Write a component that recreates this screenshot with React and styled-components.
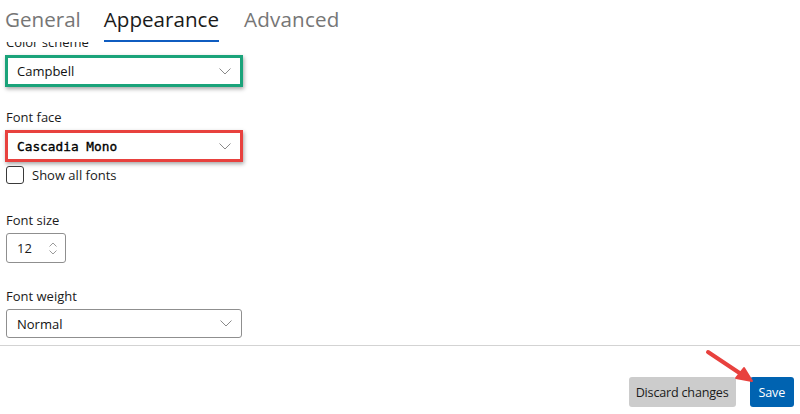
import styled, { createGlobalStyle } from "styled-components";

const GlobalStyle = createGlobalStyle`
  html, body {
    margin: 0;
    padding: 0;
    background: #ffffff;
  }
  body {
    font-family: "Open Sans", "Noto Sans", sans-serif;
    color: #1b1b1b;
  }
`;

function Chevron() {
  return (
    <svg width="12" height="7" viewBox="0 0 12 7">
      <path d="M0.5 0.5l5.5 5.5 5.5-5.5" fill="none" stroke="#8a8a8a" strokeWidth="1" />
    </svg>
  );
}

function Spinner() {
  return (
    <svg width="8" height="13" viewBox="0 0 8 13">
      <path d="M0.5 4.5l3.5-3.5 3.5 3.5M0.5 8.5l3.5 3.5 3.5-3.5" fill="none" stroke="#9a9a9a" strokeWidth="1" />
    </svg>
  );
}

function Dropdown({ value, highlight, mono }) {
  return (
    <Select $highlight={highlight}>
      <SelectText $mono={mono}>{value}</SelectText>
      <Chevron />
    </Select>
  );
}

export default function App() {
  return (
    <>
      <GlobalStyle />
      <Page>
        <TabBar>
          <Tab>General</Tab>
          <Tab $active>Appearance</Tab>
          <Tab $last>Advanced</Tab>
        </TabBar>

        <Form>
          <Field $top={0}>
            <Label>Color scheme</Label>
            <Dropdown value="Campbell" highlight="#1aa37a" />
          </Field>

          <Field $top={21}>
            <Label>Font face</Label>
            <Dropdown value="Cascadia Mono" highlight="#e8413e" mono />
            <CheckRow>
              <Checkbox />
              <span>Show all fonts</span>
            </CheckRow>
          </Field>

          <Field $top={27}>
            <Label>Font size</Label>
            <NumberBox>
              <span>12</span>
              <Spinner />
            </NumberBox>
          </Field>

          <Field $top={24}>
            <Label>Font weight</Label>
            <Dropdown value="Normal" />
          </Field>
        </Form>

        <Divider />

        <Footer>
          <Button>Discard changes</Button>
          <Button $primary>Save</Button>
        </Footer>

        <Arrow width="60" height="42" viewBox="0 0 60 42">
          <path d="M8 6L44 30" stroke="#e8413e" strokeWidth="4" strokeLinecap="round" />
          <path d="M52 35L36 32L44 22Z" fill="#e8413e" stroke="#e8413e" strokeWidth="2" strokeLinejoin="round" />
        </Arrow>
      </Page>
    </>
  );
}

const Page = styled.div`
  position: relative;
  width: 800px;
  height: 414px;
  overflow: hidden;
  background: #ffffff;
`;

const TabBar = styled.div`
  position: relative;
  z-index: 1;
  display: flex;
  gap: 23px;
  height: 42px;
  padding-left: 5px;
  background: #ffffff;
`;

const Tab = styled.div`
  position: relative;
  padding-top: 4px;
  margin-left: ${(p) => (p.$last ? "2px" : "0")};
  font-size: 20.6px;
  line-height: 30px;
  letter-spacing: ${(p) => (p.$last ? "0.2px" : "0")};
  color: ${(p) => (p.$active ? "#1a1a1a" : "#767676")};

  &::after {
    content: "";
    display: ${(p) => (p.$active ? "block" : "none")};
    position: absolute;
    left: 0;
    right: 0;
    top: 40px;
    height: 2px;
    background: #0f5cc0;
  }
`;

const Form = styled.div`
  display: flex;
  flex-direction: column;
  margin-top: -9px;
  padding: 0 6px 0 6px;
`;

const Field = styled.div`
  display: flex;
  flex-direction: column;
  margin-top: ${(p) => p.$top}px;
`;

const Label = styled.div`
  font-size: 13px;
  line-height: 18px;
  margin-bottom: 4px;
`;

const Select = styled.div`
  box-sizing: border-box;
  display: flex;
  align-items: center;
  justify-content: space-between;
  width: ${(p) => (p.$highlight ? "238px" : "236px")};
  height: ${(p) => (p.$highlight ? "32px" : "29px")};
  margin-left: ${(p) => (p.$highlight ? "-1px" : "0")};
  padding: 0 9px 0 ${(p) => (p.$highlight ? "9px" : "10px")};
  border: ${(p) => (p.$highlight ? `3px solid ${p.$highlight}` : "1px solid #8f8f8f")};
  border-radius: ${(p) => (p.$highlight ? "0" : "3px")};
  box-shadow: ${(p) => (p.$highlight ? "1px 2px 4px rgba(0, 0, 0, 0.35)" : "none")};
  background: #ffffff;
`;

const SelectText = styled.span`
  font-family: ${(p) => (p.$mono ? '"DejaVu Sans Mono", "Liberation Mono", monospace' : "inherit")};
  font-size: ${(p) => (p.$mono ? "12.8px" : "13px")};
  font-weight: 400;
  color: ${(p) => (p.$mono ? "#000000" : "#111111")};
  -webkit-text-stroke: ${(p) => (p.$mono ? "0.35px #000000" : "0")};
`;

const CheckRow = styled.label`
  display: flex;
  align-items: center;
  gap: 8px;
  margin-top: 4px;
  font-size: 13px;
`;

const Checkbox = styled.span`
  box-sizing: border-box;
  width: 18px;
  height: 18px;
  border: 1px solid #3a3a3a;
  border-radius: 3px;
  background: #ffffff;
`;

const NumberBox = styled.div`
  box-sizing: border-box;
  display: flex;
  align-items: center;
  gap: 17px;
  width: 60px;
  height: 30px;
  padding-left: 10px;
  border: 1px solid #8f8f8f;
  border-radius: 3px;
  font-size: 13px;
`;

const Divider = styled.div`
  height: 1px;
  margin-top: 7px;
  background: #d3d3d3;
`;

const Footer = styled.div`
  display: flex;
  justify-content: flex-end;
  gap: 14px;
  padding: 31px 6px 0 0;
`;

const Button = styled.button`
  height: 30px;
  padding: 0 ${(p) => (p.$primary ? "9px" : "7px")};
  border: none;
  border-radius: 3px;
  font-family: "Open Sans", "Noto Sans", sans-serif;
  font-size: 12.6px;
  letter-spacing: -0.2px;
  color: ${(p) => (p.$primary ? "#ffffff" : "#1b1b1b")};
  background: ${(p) => (p.$primary ? "#0063b1" : "#cccccc")};
`;

const Arrow = styled.svg`
  position: absolute;
  left: 700px;
  top: 346px;
`;
